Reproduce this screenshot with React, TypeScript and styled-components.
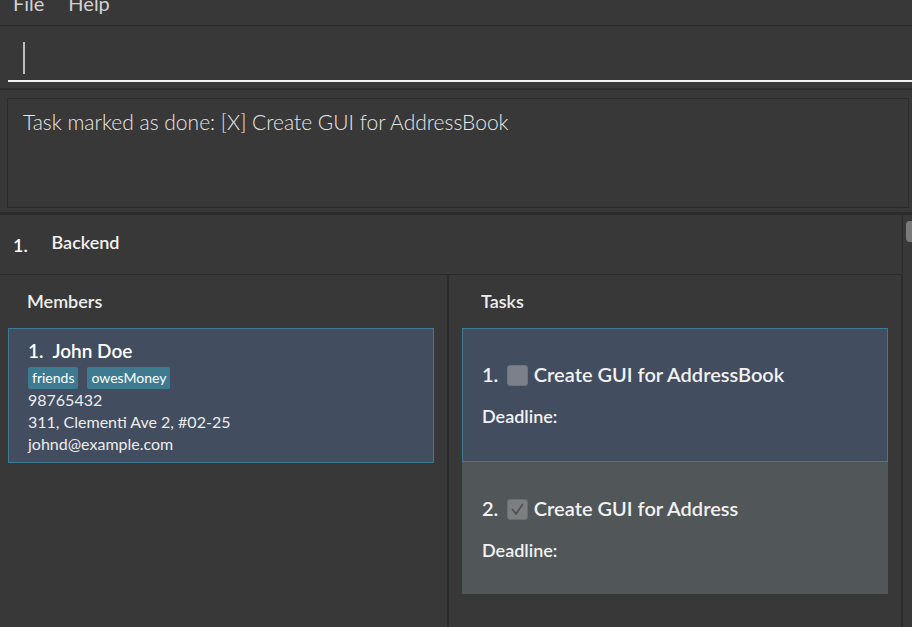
import React from 'react';
import styled, { createGlobalStyle } from 'styled-components';

const GlobalStyle = createGlobalStyle`
  html, body { margin: 0; padding: 0; background: #383838; }
  body { font-family: Lato, "Open Sans", sans-serif; }
  * { box-sizing: border-box; }
`;

const LINE = '#2b2b2b';

const Window = styled.div`
  width: 912px;
  height: 627px;
  overflow: hidden;
  display: flex;
  flex-direction: column;
  background: #383838;
  color: #eeeeee;
`;

const MenuBar = styled.div`
  flex: none;
  height: 26px;
  display: flex;
  align-items: flex-start;
  gap: 24px;
  padding-left: 13px;
  border-bottom: 1px solid ${LINE};
  overflow: hidden;
`;

const MenuItem = styled.span`
  font-size: 20px;
  line-height: 20px;
  color: #d2d2d2;
  margin-top: -7px;
`;

const CommandPane = styled.div`
  flex: none;
  height: 64px;
  padding-left: 8px;
  border-bottom: 2px solid ${LINE};
`;

const CommandField = styled.div`
  height: 56px;
  display: flex;
  align-items: flex-start;
  padding: 16px 0 0 15px;
  border-bottom: 2px solid #f0f0f0;
`;

const Caret = styled.span`
  width: 2px;
  height: 32px;
  background: #bdbdbd;
`;

const ResultPane = styled.div`
  flex: none;
  height: 125px;
  display: flex;
  padding: 8px 3px 4px 7px;
  border-bottom: 3px solid ${LINE};
`;

const ResultBox = styled.div`
  flex: 1;
  border: 1px solid ${LINE};
  padding: 10px 15px 0;
  font-size: 21px;
  line-height: 1.2;
  font-weight: 300;
  color: #e6e6e6;
`;

const TeamArea = styled.div`
  flex: 1;
  display: flex;
  min-height: 0;
`;

const TeamList = styled.div`
  flex: 1;
  display: flex;
  flex-direction: column;
  border-right: 1px solid ${LINE};
`;

const ScrollTrack = styled.div`
  flex: none;
  width: 9px;
  padding: 6px 0 0 3px;
`;

const ScrollThumb = styled.div`
  height: 21px;
  background: #7a7a7a;
  border-radius: 4px 0 0 4px;
`;

const TeamHeader = styled.div`
  flex: none;
  height: 60px;
  display: flex;
  align-items: flex-start;
  padding: 16px 0 0 13px;
  border-bottom: 1px solid ${LINE};
`;

const TeamIndex = styled.span`
  width: 38.5px;
  font-size: 18px;
  font-weight: 600;
  color: #ffffff;
  margin-top: 2.5px;
`;

const TeamName = styled.span`
  font-size: 18px;
  font-weight: 600;
  color: #f2f2f2;
`;

const Columns = styled.div`
  flex: 1;
  display: flex;
`;

const Column = styled.div<{ $pad: number; $border: number }>`
  display: flex;
  flex-direction: column;
  padding-left: ${(p) => p.$pad}px;
  border-right: ${(p) => p.$border}px solid ${LINE};
`;

const MembersColumn = styled(Column)`
  width: 449px;
`;

const TasksColumn = styled(Column)`
  flex: 1;
`;

const ColumnLabel = styled.div`
  font-size: 18px;
  font-weight: 600;
  color: #eeeeee;
  padding: 14.5px 0 0 19px;
  margin-bottom: 16.5px;
`;

const Card = styled.div<{ $selected?: boolean }>`
  width: 426px;
  border: 1px solid ${(p) => (p.$selected ? '#3e7b91' : '#515658')};
  background: ${(p) => (p.$selected ? '#424d5f' : '#515658')};
  padding-left: 19px;
`;

const MemberCard = styled(Card)`
  height: 135px;
  padding-top: 9.5px;
`;

const MemberName = styled.div`
  font-size: 19px;
  font-weight: 600;
  color: #ffffff;
  white-space: pre;
`;

const TagRow = styled.div`
  display: flex;
  gap: 9px;
  margin-top: 5px;
`;

const Tag = styled.span`
  height: 22px;
  line-height: 22px;
  padding: 0 4px;
  font-size: 14px;
  color: #ffffff;
  background: #3e7b91;
  border-radius: 2px;
`;

const Detail = styled.div`
  font-size: 16px;
  line-height: 22px;
  color: #ececec;
`;

const TaskCard = styled(Card)<{ $h: number }>`
  height: ${(p) => p.$h}px;
  padding-top: 32.6px;
`;

const TaskTitleRow = styled.div`
  display: flex;
  align-items: flex-start;
  height: 24px;
  font-size: 20px;
  line-height: 24px;
  font-weight: 600;
  color: #f2f2f2;
`;

const TaskIndex = styled.span`
  margin-right: 8.5px;
`;

const CheckBox = styled.span<{ $checked?: boolean }>`
  width: 21px;
  height: 21px;
  margin: 3px 6px 0 0;
  border-radius: 3px;
  background: ${(p) => (p.$checked ? '#7c7e80' : '#7b808a')};
  border: 1px solid ${(p) => (p.$checked ? '#6c6e70' : '#6e737c')};
  display: flex;
  align-items: center;
  justify-content: center;
`;

const Deadline = styled.div`
  margin-top: 19.6px;
  font-size: 18px;
  font-weight: 600;
  color: #f2f2f2;
`;

const CheckMark = () => (
  <svg width="15" height="15" viewBox="0 0 15 15">
    <path d="M2.5 7.5 L6 12 L12.5 2.5" fill="none" stroke="#4f5255" strokeWidth="1.8" strokeLinejoin="round" strokeLinecap="round" />
  </svg>
);

const tasks = [
  { title: 'Create GUI for AddressBook', done: false, selected: true, h: 134 },
  { title: 'Create GUI for Address', done: true, selected: false, h: 132 },
];

export default function App() {
  return (
    <>
      <GlobalStyle />
      <Window>
        <MenuBar>
          <MenuItem>File</MenuItem>
          <MenuItem>Help</MenuItem>
        </MenuBar>
        <CommandPane>
          <CommandField>
            <Caret />
          </CommandField>
        </CommandPane>
        <ResultPane>
          <ResultBox>Task marked as done: [X] Create GUI for AddressBook</ResultBox>
        </ResultPane>
        <TeamArea>
          <TeamList>
            <TeamHeader>
              <TeamIndex>1.</TeamIndex>
              <TeamName>Backend</TeamName>
            </TeamHeader>
            <Columns>
              <MembersColumn $pad={8} $border={2}>
                <ColumnLabel>Members</ColumnLabel>
                <MemberCard $selected>
                  <MemberName>{'1.  John Doe'}</MemberName>
                  <TagRow>
                    <Tag>friends</Tag>
                    <Tag>owesMoney</Tag>
                  </TagRow>
                  <Detail>98765432</Detail>
                  <Detail>311, Clementi Ave 2, #02-25</Detail>
                  <Detail>johnd@example.com</Detail>
                </MemberCard>
              </MembersColumn>
              <TasksColumn $pad={13} $border={1}>
                <ColumnLabel>Tasks</ColumnLabel>
                {tasks.map((t, i) => (
                  <TaskCard key={i} $selected={t.selected} $h={t.h}>
                    <TaskTitleRow>
                      <TaskIndex>{i + 1}.</TaskIndex>
                      <CheckBox $checked={t.done}>{t.done && <CheckMark />}</CheckBox>
                      <span>{t.title}</span>
                    </TaskTitleRow>
                    <Deadline>Deadline:</Deadline>
                  </TaskCard>
                ))}
              </TasksColumn>
            </Columns>
          </TeamList>
          <ScrollTrack>
            <ScrollThumb />
          </ScrollTrack>
        </TeamArea>
      </Window>
    </>
  );
}
